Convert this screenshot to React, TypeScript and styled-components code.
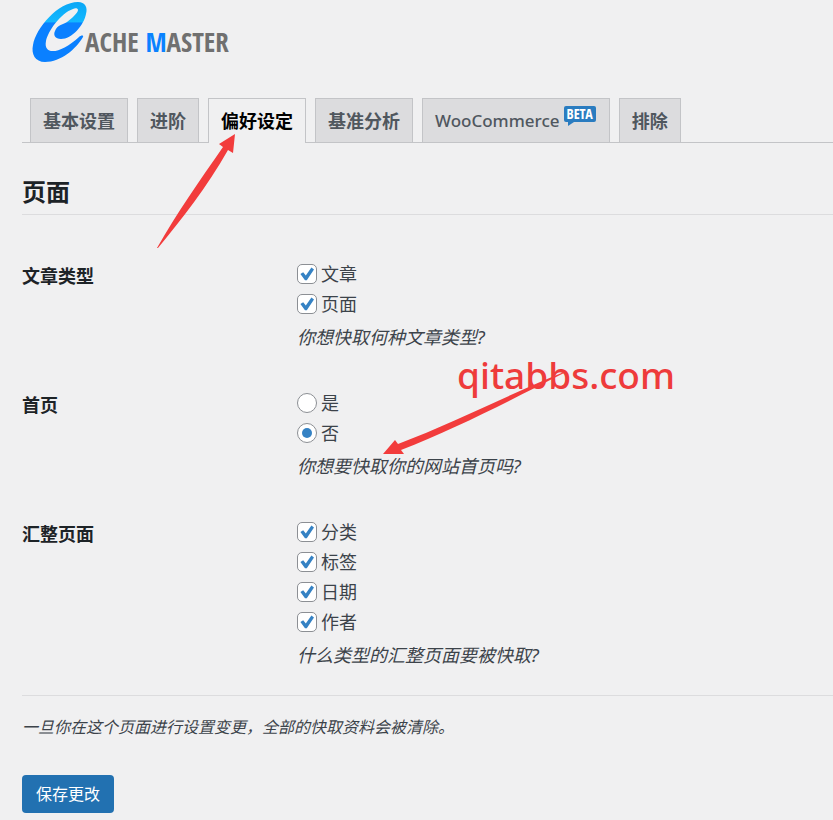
import React from 'react';
import styled, { createGlobalStyle, css } from 'styled-components';

const GlobalStyle = createGlobalStyle`
  *, *::before, *::after { box-sizing: border-box; }
  body {
    margin: 0;
    background: #f0f0f1;
    color: #3c434a;
    font-family: "Noto Sans", "Noto Sans CJK SC", sans-serif;
    font-size: 18px;
    line-height: 30px;
  }
`;

const Page = styled.div`
  position: relative;
  min-height: 100vh;
  overflow: hidden;
`;

const Wrap = styled.main`
  padding: 0 0 7px 22px;
`;

const Brand = styled.div`
  display: flex;
  align-items: flex-end;
  height: 64px;
  padding-left: 8px;
`;

const BrandName = styled.span`
  font: 800 27px/28px "Open Sans Condensed", "Noto Sans Condensed", "Roboto Condensed", Roboto, sans-serif;
  color: #707070;
  margin: 0 0 8px -3px;
  white-space: nowrap;
  em { color: #0a82ff; font-style: normal; }
`;

const Tabs = styled.nav`
  display: flex;
  gap: 9px;
  margin-top: 34px;
  padding-left: 8px;
  border-bottom: 1px solid #c3c4c7;
`;

const Tab = styled.a<{ $active?: boolean }>`
  display: flex;
  height: 44px;
  padding: 0 12px;
  line-height: 44px;
  font-weight: 600;
  white-space: nowrap;
  text-decoration: none;
  color: #50575e;
  background: #dcdcde;
  border: 1px solid #c3c4c7;
  border-bottom: 0;
  ${p => p.$active && css`
    color: #000;
    background: #f0f0f1;
    margin-bottom: -1px;
    height: 45px;
  `}
`;

const WooName = styled.span`
  font-size: 17px;
  font-weight: 500;
`;

const Beta = styled.span`
  position: relative;
  align-self: flex-start;
  height: 16px;
  margin: 7px 1px 0 4px;
  padding: 0 3px;
  border-radius: 2px;
  background: #2a7cc0;
  color: #fff;
  font: bold 14px/16px "Open Sans Condensed", "Noto Sans Condensed", "Roboto Condensed", Roboto, sans-serif;
  &::after {
    content: "";
    position: absolute;
    left: 4px;
    top: 100%;
    border-top: 4px solid #2a7cc0;
    border-right: 6px solid transparent;
  }
`;

const SectionTitle = styled.h2`
  margin: 32px 0 0;
  padding-bottom: 5px;
  border-bottom: 1px solid #dcdcde;
  color: #1d2327;
  font-size: 24px;
  line-height: 34px;
  font-weight: 700;
`;

const Group = styled.fieldset`
  display: grid;
  grid-template-columns: 275px 1fr;
  margin: 0;
  padding: 0;
  border: 0;
`;

const Settings = styled.div`
  display: grid;
  gap: 36px;
  padding: 44px 0 25px;
`;

const GroupName = styled.div`
  padding-top: 2px;
  color: #1d2327;
  font-weight: 600;
`;

const Option = styled.label`
  display: flex;
  align-items: center;
  width: max-content;
  gap: 4px;
  height: 30px;
`;

const choice = css`
  appearance: none;
  flex: none;
  width: 20px;
  height: 20px;
  margin: 0;
  border: 1px solid #8c8f94;
  background: #fff;
`;

const Check = styled.input`
  ${choice}
  border-radius: 5px;
  grid-area: 1 / 1;
  & + svg { visibility: hidden; }
  &:checked + svg { visibility: visible; }
`;

const CheckBox = styled.span`
  display: grid;
  svg { grid-area: 1 / 1; pointer-events: none; }
`;

const Radio = styled.input`
  ${choice}
  display: grid;
  place-items: center;
  border-radius: 50%;
  &:checked::before {
    content: "";
    width: 10px;
    height: 10px;
    border-radius: 50%;
    background: #3582c4;
  }
`;

const Hint = styled.p`
  margin: 3px 0 0;
  font-style: italic;
  line-height: 30px;
`;

const Note = styled.p`
  margin: 0;
  padding-top: 16px;
  border-top: 1px solid #dcdcde;
  font-size: 16px;
  font-style: italic;
`;

const Save = styled.button`
  display: block;
  height: 38px;
  margin-top: 33px;
  padding: 0 14px;
  border: 0;
  border-radius: 4px;
  background: #2271b1;
  color: #fff;
  font: 16px/38px "Noto Sans", "Noto Sans CJK SC", sans-serif;
`;

const Annotation = styled.svg`
  position: absolute;
  left: 0;
  top: 0;
  pointer-events: none;
`;

const Watermark = styled.div`
  position: absolute;
  left: 457px;
  top: 349px;
  color: #ee3b3b;
  font: 500 37px/52px "Noto Sans", sans-serif;
`;

function LogoMark() {
  return (
    <svg width="58" height="64" viewBox="30 0 58 64" aria-hidden="true">
      <defs>
        <linearGradient id="mark" x1="0" y1="0" x2="0" y2="64" gradientUnits="userSpaceOnUse">
          <stop offset="0" stopColor="#0aa5f5" />
          <stop offset=".34" stopColor="#12b8ff" />
          <stop offset=".36" stopColor="#0a80ff" />
          <stop offset="1" stopColor="#0a80ff" />
        </linearGradient>
      </defs>
      <path fill="url(#mark)" d="M83 37C76 49 61 62 45 62C35 62 31 54 33 45C36 28 58 2 78 2C85 2 88 7 86 14C84 25 72 39 61 39C55 39 53 35 55 31C57 25 64 24 67 22C71 19 78 13 78 10C78 8 75 8 73 9C61 13 48 31 46 41C43 56 61 54 79 37C81 35 84 35 83 37Z" />
    </svg>
  );
}

type Item = { label: string; on: boolean };

function Setting({ name, kind, items, hint }: { name: string; kind: 'check' | 'radio'; items: Item[]; hint: string }) {
  return (
    <Group aria-label={name}>
      <GroupName>{name}</GroupName>
      <div>
        {items.map(item => (
          <Option key={item.label}>
            {kind === 'check' ? (
              <CheckBox>
                <Check type="checkbox" defaultChecked={item.on} />
                <svg width="20" height="20" viewBox="0 0 20 20">
                  <path d="M3.4 10L6.2 8.2L8.8 11.4L14.4 3.6L17 5.4L9.8 16.2H8Z" fill="#3582c4" />
                </svg>
              </CheckBox>
            ) : (
              <Radio type="radio" name={name} defaultChecked={item.on} />
            )}
            {item.label}
          </Option>
        ))}
        <Hint>{hint}</Hint>
      </div>
    </Group>
  );
}

const checked = (...labels: string[]) => labels.map(label => ({ label, on: true }));

export default function App() {
  return (
    <Page>
      <GlobalStyle />
      <Wrap>
        <Brand>
          <LogoMark />
          <BrandName>ACHE <em>M</em>ASTER</BrandName>
        </Brand>
        <Tabs>
          <Tab href="#basic">基本设置</Tab>
          <Tab href="#advanced">进阶</Tab>
          <Tab href="#preferences" $active aria-current="page">偏好设定</Tab>
          <Tab href="#benchmark">基准分析</Tab>
          <Tab href="#woocommerce"><WooName>WooCommerce</WooName><Beta>BETA</Beta></Tab>
          <Tab href="#exclusion">排除</Tab>
        </Tabs>
        <SectionTitle>页面</SectionTitle>
        <form onSubmit={e => e.preventDefault()}>
          <Settings>
            <Setting name="文章类型" kind="check" items={checked('文章', '页面')} hint="你想快取何种文章类型?" />
            <Setting name="首页" kind="radio" items={[{ label: '是', on: false }, { label: '否', on: true }]} hint="你想要快取你的网站首页吗?" />
            <Setting name="汇整页面" kind="check" items={checked('分类', '标签', '日期', '作者')} hint="什么类型的汇整页面要被快取?" />
          </Settings>
          <Note>一旦你在这个页面进行设置变更，全部的快取资料会被清除。</Note>
          <Save type="submit">保存更改</Save>
        </form>
      </Wrap>
      <Watermark>qitabbs.com</Watermark>
      <Annotation width="833" height="820" viewBox="0 0 833 820" aria-hidden="true">
        <path fill="#f23c3c" d="M235 134L219 144L223 147C200 180 177 213 157 248L158 248C181 220 207 187 228 150L233 153Z" />
        <path fill="#f23c3c" d="M383 454L395 440L398 444C455 422 510 394 564 372L564 373C515 398 455 429 401 450L404 454Z" />
      </Annotation>
    </Page>
  );
}
